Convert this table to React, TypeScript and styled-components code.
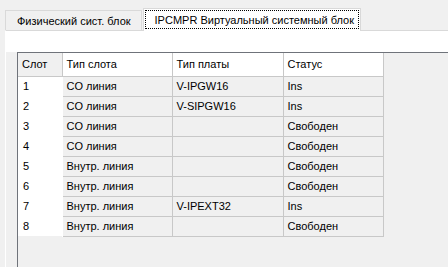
import React from "react";
import styled, { createGlobalStyle } from "styled-components";

const Global = createGlobalStyle`
  html, body {
    margin: 0;
    padding: 0;
    background: #f0f0f0;
  }
  body {
    font-family: "Liberation Sans", Arial, sans-serif;
    font-size: 11px;
    color: #000;
  }
`;

const Window = styled.div`
  width: 448px;
  height: 267px;
  display: flex;
  flex-direction: column;
  overflow: hidden;
  background: #f0f0f0;
`;

const TabStrip = styled.div`
  display: flex;
  align-items: flex-end;
  height: 30px;
  padding-left: 5px;
  box-sizing: border-box;
`;

const Tab = styled.div<{ $active?: boolean }>`
  box-sizing: border-box;
  display: flex;
  align-items: center;
  height: ${(p) => (p.$active ? "23px" : "20px")};
  margin-bottom: ${(p) => (p.$active ? "-1px" : "0")};
  padding: ${(p) => (p.$active ? "1px 1px 2px 1px" : "0 10px 0 11px")};
  background: ${(p) => (p.$active ? "#ffffff" : "#f0f0f0")};
  border: 1px solid #d9d9d9;
  border-bottom: none;
  margin-left: ${(p) => (p.$active ? "1px" : "0")};
  position: relative;
  z-index: ${(p) => (p.$active ? 1 : 0)};
  white-space: nowrap;
`;

const FocusBox = styled.span`
  display: flex;
  align-items: center;
  height: 100%;
  box-sizing: border-box;
  padding: 0 4px 0 9px;
  border: 1px dotted #000;
`;

const Page = styled.div`
  flex: 1;
  display: flex;
  flex-direction: column;
  border-top: 1px solid #d9d9d9;
  border-left: 1px solid #ffffff;
  margin-left: 5px;
`;

const Toolbar = styled.div`
  height: 21px;
  background: #ffffff;
`;

const Grid = styled.div`
  flex: 1;
  margin-left: 11px;
  border-top: 1px solid #6f737a;
  border-left: 1px solid #6f737a;
  background: #f0f0f0;
`;

const Table = styled.table`
  border-collapse: collapse;
  table-layout: fixed;
  border-spacing: 0;
`;

const HeadCell = styled.th<{ $w: number; $corner?: boolean }>`
  box-sizing: border-box;
  width: ${(p) => p.$w}px;
  height: 23px;
  padding: 0 0 0 4px;
  text-align: left;
  font-weight: normal;
  background: ${(p) => (p.$corner ? "#f0f0f0" : "#ffffff")};
  border-right: 1px solid #c8c8c8;
  border-bottom: 1px solid #c8c8c8;
`;

const SlotCell = styled.td`
  height: 20px;
  box-sizing: border-box;
  padding: 0 0 0 5px;
  background: #ffffff;
  border-right: 1px solid #ffffff;
`;

const Cell = styled.td`
  height: 20px;
  box-sizing: border-box;
  padding: 0 0 0 4px;
  background: #f0f0f0;
  border-right: 1px solid #c8c8c8;
  border-bottom: 1px solid #c8c8c8;
  white-space: nowrap;
`;

type Row = { slot: number; kind: string; board: string; status: string };

const rows: Row[] = [
  { slot: 1, kind: "CO линия", board: "V-IPGW16", status: "Ins" },
  { slot: 2, kind: "CO линия", board: "V-SIPGW16", status: "Ins" },
  { slot: 3, kind: "CO линия", board: "", status: "Свободен" },
  { slot: 4, kind: "CO линия", board: "", status: "Свободен" },
  { slot: 5, kind: "Внутр. линия", board: "", status: "Свободен" },
  { slot: 6, kind: "Внутр. линия", board: "", status: "Свободен" },
  { slot: 7, kind: "Внутр. линия", board: "V-IPEXT32", status: "Ins" },
  { slot: 8, kind: "Внутр. линия", board: "", status: "Свободен" },
];

export default function App() {
  return (
    <Window>
      <Global />
      <TabStrip>
        <Tab>Физический сист. блок</Tab>
        <Tab $active>
          <FocusBox>IPCMPR Виртуальный системный блок</FocusBox>
        </Tab>
      </TabStrip>
      <Page>
        <Toolbar />
        <Grid>
          <Table>
            <thead>
              <tr>
                <HeadCell $w={44} $corner>
                  Слот
                </HeadCell>
                <HeadCell $w={110}>Тип слота</HeadCell>
                <HeadCell $w={111}>Тип платы</HeadCell>
                <HeadCell $w={100}>Статус</HeadCell>
              </tr>
            </thead>
            <tbody>
              {rows.map((r) => (
                <tr key={r.slot}>
                  <SlotCell>{r.slot}</SlotCell>
                  <Cell>{r.kind}</Cell>
                  <Cell>{r.board}</Cell>
                  <Cell>{r.status}</Cell>
                </tr>
              ))}
            </tbody>
          </Table>
        </Grid>
      </Page>
    </Window>
  );
}
